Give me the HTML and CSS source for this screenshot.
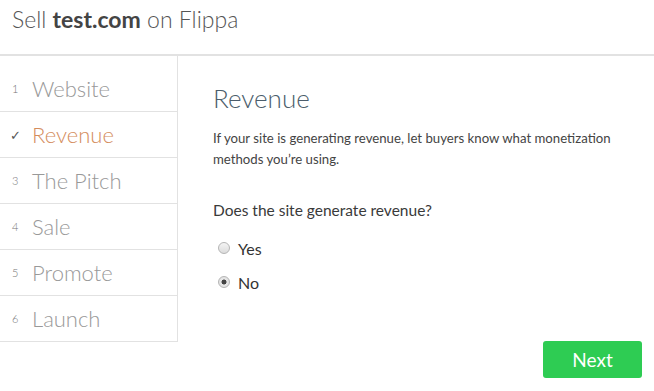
FILE: index.html
```html
<!DOCTYPE html>
<html lang="en">
<head>
  <meta charset="UTF-8">
  <title>Sell test.com on Flippa</title>
  <link rel="stylesheet" href="styles.css">
</head>
<body>
  <div class="header">Sell <b>test.com</b> on Flippa</div>
  <div class="wizard">
    <!-- Steps -->
    <ul class="steps">
      <li><span class="num">1</span>Website</li>
      <li class="current"><span class="num">&#10003;</span>Revenue</li>
      <li><span class="num">3</span>The Pitch</li>
      <li><span class="num">4</span>Sale</li>
      <li><span class="num">5</span>Promote</li>
      <li><span class="num">6</span>Launch</li>
    </ul>
    <!-- Step content -->
    <div class="content">
      <h2>Revenue</h2>
      <p class="intro">If your site is generating revenue, let buyers know what monetization methods you’re using.</p>
      <p class="question">Does the site generate revenue?</p>
      <label class="option"><input type="radio" name="revenue" value="yes"> Yes</label>
      <label class="option"><input type="radio" name="revenue" value="no" checked> No</label>
      <div class="actions">
        <button class="next">Next</button>
      </div>
    </div>
  </div>
</body>
</html>
```

FILE: styles.css
```css
body {
  margin: 0;
  font-family: Lato, "Open Sans", sans-serif;
  background-color: #fff;
  color: #333;
}
.header {
  height: 54px;
  line-height: 38px;
  padding: 0 12px;
  font-size: 23px;
  font-weight: 300;
  color: #555;
  border-bottom: 2px solid #e2e2e2;
}
.header b {
  font-weight: 700;
  color: #444;
}
.wizard {
  display: flex;
  align-items: flex-start;
}
/* Steps */
.steps {
  list-style: none;
  margin: 0;
  padding: 10px 0 0;
  width: 177px;
  border-right: 1px solid #e2e2e2;
  border-bottom: 1px solid #e2e2e2;
}
.steps li {
  display: flex;
  align-items: center;
  height: 45px;
  border-bottom: 1px solid #e2e2e2;
  font-size: 22px;
  font-weight: 300;
  color: #999;
}
.steps li:last-child {
  border-bottom: none;
}
.steps .num {
  width: 20px;
  padding-left: 12px;
  font-size: 11px;
  color: #777;
}
.steps .current {
  color: #d48c5c;
}
.steps .current .num {
  padding-left: 10px;
  width: 22px;
  font-size: 13px;
  color: #555;
}
/* Content */
.content {
  flex: 1;
  padding: 26px 12px 0 35px;
}
.content h2 {
  margin: 0;
  font-size: 26px;
  font-weight: 300;
  color: #4b5d6b;
}
.intro {
  margin: 14px 0 0;
  font-size: 13.2px;
  line-height: 21px;
  color: #444;
}
.question {
  margin: 31px 0 12px;
  font-size: 15.5px;
  color: #3a3a3a;
}
.option {
  display: flex;
  align-items: center;
  height: 34px;
  font-size: 16px;
  color: #333;
}
.option input {
  appearance: none;
  -webkit-appearance: none;
  box-sizing: border-box;
  margin: 0 8px 0 5px;
  width: 12px;
  height: 12px;
  border: 1px solid #b5b5b5;
  border-radius: 50%;
  background: linear-gradient(#f4f4f4, #dcdcdc);
}
.option input:checked {
  background: radial-gradient(circle, #444 0, #444 2.2px, #e8e8e8 2.8px, #dcdcdc 100%);
}
.actions {
  display: flex;
  justify-content: flex-end;
  margin-top: 42px;
}
.next {
  width: 99px;
  height: 37px;
  border: none;
  border-radius: 3px;
  background-color: #2ecc53;
  color: #fff;
  font-family: inherit;
  font-size: 19px;
}
```
